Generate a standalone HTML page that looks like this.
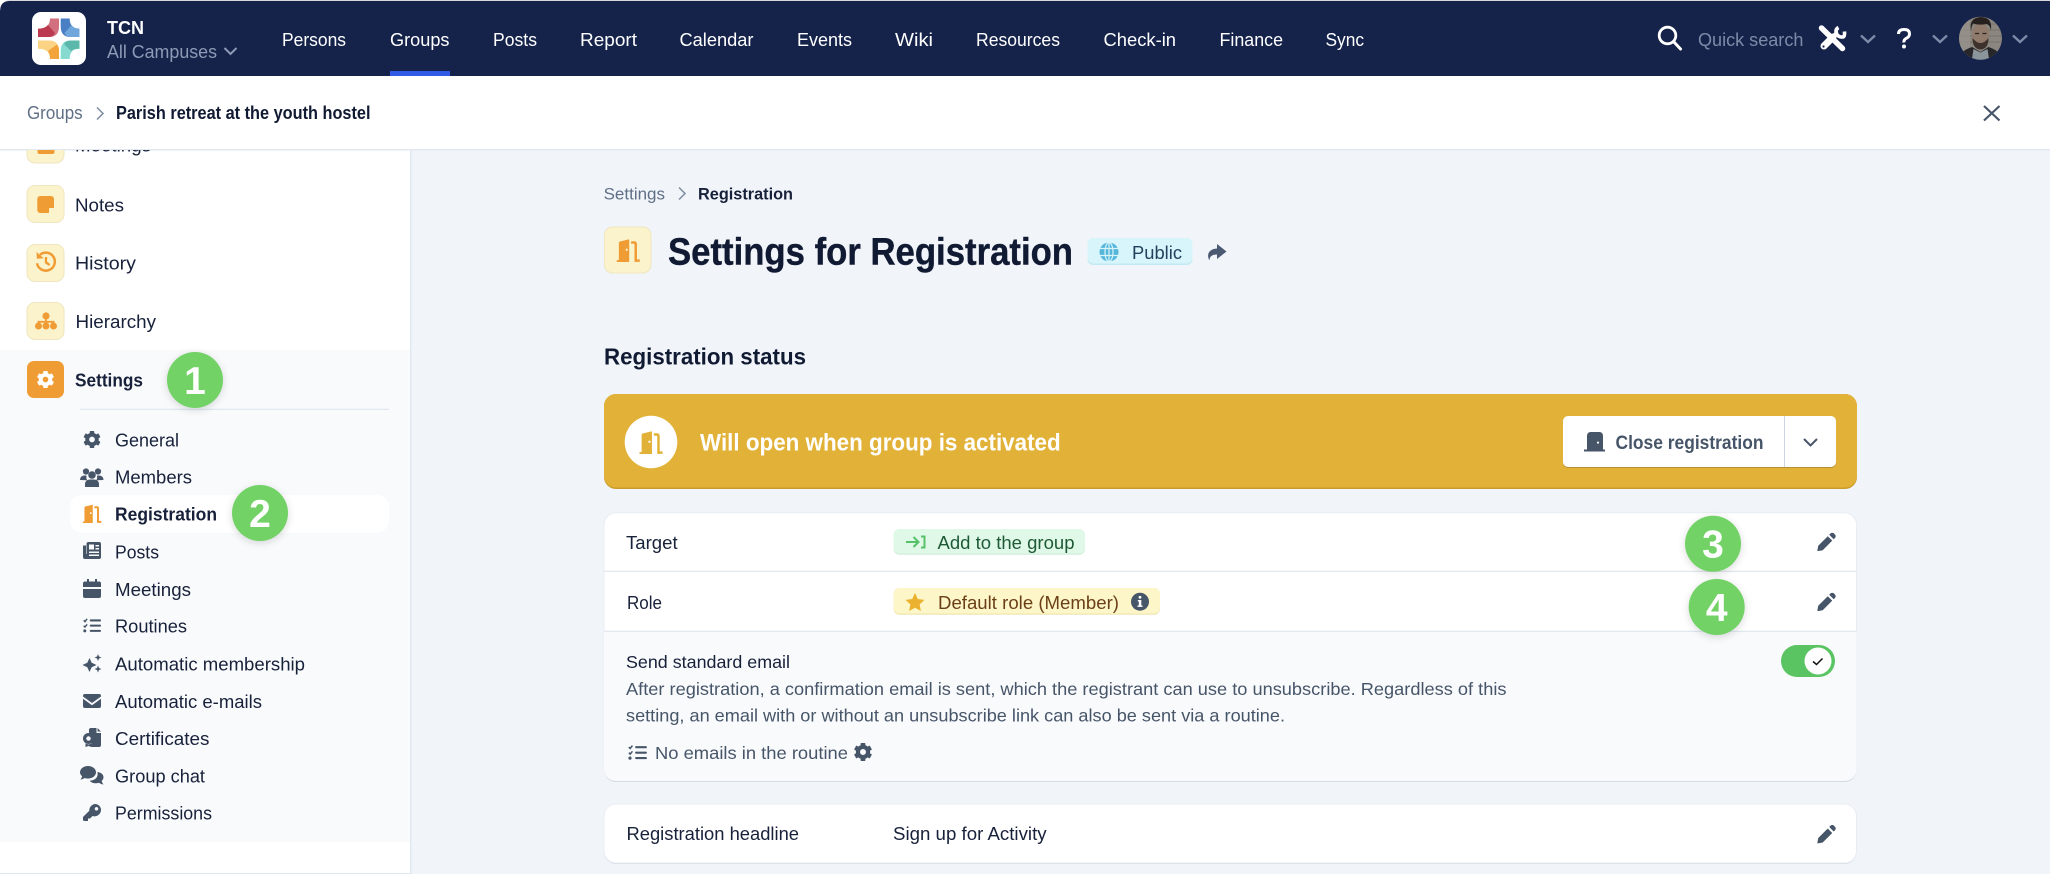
<!DOCTYPE html>
<html lang="en"><head><meta charset="utf-8"><title>Settings for Registration</title>
<style>
html,body{margin:0;padding:0;background:#fff;width:2050px;height:874px;overflow:hidden}
svg{display:block}
text{font-family:"Liberation Sans",sans-serif;font-size:18px;fill:#18213a;white-space:pre}
.n{fill:#fff}
.b{font-weight:700}
.g{fill:#475569}
</style></head><body>
<svg xmlns="http://www.w3.org/2000/svg" width="2050" height="874" viewBox="0 0 2050 874">
<defs>
<symbol id="gear" viewBox="0 0 24 24"><circle cx="12" cy="12" r="6.4" fill="none" stroke="currentColor" stroke-width="5.2"/><g fill="currentColor"><rect x="9" y="0.6" width="6" height="5" rx="1"/><rect x="9" y="0.6" width="6" height="5" rx="1" transform="rotate(60 12 12)"/><rect x="9" y="0.6" width="6" height="5" rx="1" transform="rotate(120 12 12)"/><rect x="9" y="0.6" width="6" height="5" rx="1" transform="rotate(180 12 12)"/><rect x="9" y="0.6" width="6" height="5" rx="1" transform="rotate(240 12 12)"/><rect x="9" y="0.6" width="6" height="5" rx="1" transform="rotate(300 12 12)"/></g></symbol>
<symbol id="door" viewBox="0 0 24 24"><path fill="currentColor" fill-rule="evenodd" d="M0 24v-2h2.2V4.2c0-.8.5-1.4 1.2-1.6L13 0.2V24zM9.2 11.2a1.2 1.2 0 1 0 2.4 0a1.2 1.2 0 1 0-2.4 0z"/><path fill="none" stroke="currentColor" stroke-width="2.6" d="M15 3.6h3.4c.8 0 1.4.6 1.4 1.4V22.6H24"/></symbol>
<symbol id="pencil" viewBox="0 0 19 19"><path fill="currentColor" d="M10.8 3.6l4.6 4.6L5.6 18 .6 18.9c-.3 0-.5-.2-.5-.5L1 13.4zM12.3 2.1l1.3-1.3c1-1 2.6-1 3.6 0l1 1c1 1 1 2.6 0 3.6l-1.3 1.3z"/></symbol>
<symbol id="list" viewBox="0 0 20 16"><path fill="none" stroke="currentColor" stroke-width="1.6" d="M.8 2.2l1.4 1.5L4.6.6M.8 8.2l1.4 1.5 2.4-3"/><circle cx="2" cy="14" r="1.7" fill="currentColor"/><rect x="7.5" y="1.2" width="12.5" height="2.3" rx="1" fill="currentColor"/><rect x="7.5" y="7" width="12.5" height="2.3" rx="1" fill="currentColor"/><rect x="7.5" y="12.8" width="12.5" height="2.3" rx="1" fill="currentColor"/></symbol>
<clipPath id="sideclip"><rect x="0" y="150" width="410" height="724"/></clipPath>
<clipPath id="av"><circle cx="1980.5" cy="38.3" r="21.5"/></clipPath>
</defs>

<!-- main bg -->
<rect width="2050" height="874" fill="#f1f5fa"/>

<!-- top nav -->
<rect width="2050" height="2" fill="#d8d8d8"/>
<path d="M0 76V11Q0 1 10 1H2050V76z" fill="#15234b"/>
<path d="M0 0H10Q0 1 0 11z" fill="#fff"/>
<rect x="32" y="12" width="54" height="53" rx="9" fill="#fff"/>
<!-- logo: four curved bands around a white star -->
<path d="M50 18.5h9v8Q59 37 49 37H38v-8.3Q50 28.7 50 18.5z" fill="#d2707f"/>
<path d="M38 28.7Q45 28.7 48 25L55 33Q53 37 49 37H38z" fill="#bb3a50"/>
<path d="M69.700 18.500h-9v8Q60.700 37 70.700 37H79.500v-8.300Q69.700 28.700 69.700 18.500z" fill="#4a7fc4"/>
<path d="M79.500 28.700Q74 28.700 71.500 25L64.500 33Q66.500 37 70.700 37H79.500z" fill="#6fa7dc"/>
<path d="M50 59h9v-8Q59 40.500 49 40.500H38v8.300Q50 48.800 50 59z" fill="#fad384"/>
<path d="M50 59h9v-8Q59 47 57 44.500L48 51Q50 54 50 59z" fill="#f2a33a"/>
<path d="M69.700 59h-9v-8Q60.700 40.500 70.700 40.500H79.500v8.300Q69.700 48.800 69.700 59z" fill="#86dad0"/>
<path d="M79.500 40.500H70.700Q66 40.500 64 44L71 51Q73 48.800 79.500 48.800z" fill="#5cb8aa"/>
<text x="107" y="34" class="n b" textLength="37" lengthAdjust="spacingAndGlyphs">TCN</text>
<text x="107" y="58" style="fill:#8e9ab5" textLength="110" lengthAdjust="spacingAndGlyphs">All Campuses</text>
<path d="M224.500 48l6 6 6-6" fill="none" stroke="#8e9ab5" stroke-width="2"/>
<g class="nav">
<text x="282" y="46" class="n" textLength="64" lengthAdjust="spacingAndGlyphs">Persons</text>
<text x="390" y="46" class="n" textLength="59.5" lengthAdjust="spacingAndGlyphs">Groups</text>
<text x="493" y="46" class="n" textLength="44" lengthAdjust="spacingAndGlyphs">Posts</text>
<text x="580" y="46" class="n" textLength="57" lengthAdjust="spacingAndGlyphs">Report</text>
<text x="679.5" y="46" class="n" textLength="74" lengthAdjust="spacingAndGlyphs">Calendar</text>
<text x="797" y="46" class="n" textLength="55" lengthAdjust="spacingAndGlyphs">Events</text>
<text x="895" y="46" class="n" textLength="38" lengthAdjust="spacingAndGlyphs">Wiki</text>
<text x="976" y="46" class="n" textLength="84" lengthAdjust="spacingAndGlyphs">Resources</text>
<text x="1103.5" y="46" class="n" textLength="72.5" lengthAdjust="spacingAndGlyphs">Check-in</text>
<text x="1219.5" y="46" class="n" textLength="63.5" lengthAdjust="spacingAndGlyphs">Finance</text>
<text x="1325.5" y="46" class="n" textLength="38.5" lengthAdjust="spacingAndGlyphs">Sync</text>
</g>
<rect x="390" y="71" width="60" height="5" fill="#2f5be7"/>
<!-- right nav -->
<circle cx="1667.5" cy="35.5" r="8.3" fill="none" stroke="#fff" stroke-width="2.8"/><path d="M1673.5 41.5l7 7.5" stroke="#fff" stroke-width="3" stroke-linecap="round"/>
<text x="1698" y="46" style="fill:#7d8aa8" textLength="105.4" lengthAdjust="spacingAndGlyphs">Quick search</text>
<!-- tools -->
<g fill="none" stroke="#fff">
<path d="M1821.500 28l21 20.500" stroke-width="5.500" stroke-linecap="round"/>
<path d="M1824 46l9-9" stroke-width="7" stroke-linecap="round"/>
<path d="M1832 38l4.500-4.500" stroke-width="4.500"/>
<path d="M1838.500 27.500q-3.500 2-2 6t6.500 3.500q2-.7 1.500-5.500" stroke-width="3.600"/>
</g>
<circle cx="1823.500" cy="46.500" r="1.100" fill="#15234b"/>
<g fill="none" stroke="#7d8aa8" stroke-width="2.400"><path d="M1861 35.500l7 6.500 7-6.500"/><path d="M1933 35.500l7 6.500 7-6.500"/><path d="M2013 35.500l7 6.500 7-6.500"/></g>
<path d="M1898.500 34q0-4.500 5.500-4.500t5.500 4.500q0 2.700-3 4.200t-2.500 4.300" fill="none" stroke="#fff" stroke-width="3"/><circle cx="1904" cy="46.500" r="2" fill="#fff"/>
<!-- avatar -->
<g clip-path="url(#av)"><rect x="1958" y="16" width="45" height="45" fill="#8b8780"/>
<path d="M1958 24h45M1958 30h45M1958 36h45M1958 42h45" stroke="#77736c" stroke-width="1"/>
<rect x="1958" y="16" width="12" height="45" fill="#98948d" opacity=".7"/>
<ellipse cx="1980.500" cy="35" rx="8.500" ry="12" fill="#8f7a6b"/>
<path d="M1971 31q-2.500-13 9.500-14q12 0 10.500 13q-1.500-5.500-4.500-6q-7 1.500-13.500-.5q-1.500 3-2 7.500z" fill="#26211f"/>
<path d="M1972.500 38q8 10 16 0q0 11-8 11.500q-8-.5-8-11.500z" fill="#3d322c"/>
<path d="M1975 33.500h4M1982.500 33.500h4" stroke="#2c2522" stroke-width="1.300"/>
<path d="M1958 62q1-11 14-15l8.500 5 8-5q13 4 14 15z" fill="#272729"/><path d="M1973.500 49l7 3.500 7-3.500 2 13h-18z" fill="#8a959c"/></g>

<!-- breadcrumb -->
<rect y="76" width="2050" height="73" fill="#fff"/><rect y="149" width="2050" height="1.5" fill="#e2e8f0"/>
<text x="27" y="119" style="fill:#5f6f86" textLength="55.6" lengthAdjust="spacingAndGlyphs">Groups</text>
<path d="M97 107.5l6 6-6 6" fill="none" stroke="#7f8ca0" stroke-width="1.5"/>
<text x="116" y="119" class="b" style="fill:#111a33" textLength="254.5" lengthAdjust="spacingAndGlyphs">Parish retreat at the youth hostel</text>
<path d="M1984 106l15.500 14.500M1999.500 106L1984 120.500" stroke="#475569" stroke-width="2.200" fill="none"/>

<!-- sidebar -->
<rect y="150.500" width="410" height="723.500" fill="#fff"/>
<rect x="410" y="150" width="1.500" height="724" fill="#e2e8f0"/>
<rect y="873" width="410" height="1" fill="#e2e8f0"/>
<rect y="350" width="410" height="492" fill="#f8fafc"/>
<g clip-path="url(#sideclip)">
<rect x="27" y="126" width="37" height="37" rx="8" fill="#fbf3cc" stroke="#efe6bf"/>
<rect x="37.5" y="135" width="17" height="19" rx="2" fill="#f09c35"/>
<text x="75" y="151.500" textLength="76" lengthAdjust="spacingAndGlyphs">Meetings</text>
</g>
<rect x="27" y="185.500" width="37" height="37" rx="8" fill="#fbf3cc" stroke="#efe6bf"/>
<path d="M40.300 196h10.700a3 3 0 0 1 3 3V207.500l-5.500 5.500H40.300a3 3 0 0 1-3-3v-11a3 3 0 0 1 3-3z" fill="#f09c35"/><path d="M49 213v-4a1 1 0 0 1 1-1h4z" fill="#fbf3cc"/>
<text x="75" y="211.300" textLength="49" lengthAdjust="spacingAndGlyphs">Notes</text>
<rect x="27" y="244.500" width="37" height="37" rx="8" fill="#fbf3cc" stroke="#efe6bf"/>
<path d="M40 254.800a9 9 0 1 1-3 8.500" fill="none" stroke="#f09c35" stroke-width="2.500"/><path d="M36.500 252l.4 6.800 6.800-.5z" fill="#f09c35"/><path d="M46 257v5.500l3.700 2.600" fill="none" stroke="#f09c35" stroke-width="2.300"/>
<text x="75" y="269.700" textLength="61" lengthAdjust="spacingAndGlyphs">History</text>
<rect x="27" y="302.500" width="37" height="37" rx="8" fill="#fbf3cc" stroke="#efe6bf"/>
<g fill="#f09c35"><circle cx="46" cy="316" r="3.600"/><rect x="45.100" y="318" width="1.800" height="6"/><path d="M38.500 326v-4.200h15v4.200" fill="none" stroke="#f09c35" stroke-width="1.800"/><circle cx="38.500" cy="326" r="3.500"/><circle cx="46" cy="326" r="3.500"/><circle cx="53.500" cy="326" r="3.500"/></g>
<text x="75.5" y="328" textLength="80.5" lengthAdjust="spacingAndGlyphs">Hierarchy</text>
<rect x="27" y="361" width="37" height="37" rx="7" fill="#f09c35"/>
<use href="#gear" x="36.5" y="370.5" width="18" height="18" style="color:#fff"/>
<text x="75" y="386.700" class="b" textLength="68" lengthAdjust="spacingAndGlyphs">Settings</text>
<rect x="80" y="408.7" width="309" height="1.3" fill="#e2e8f0"/>
<rect x="70" y="495" width="319" height="37.7" rx="12" fill="#fff"/>

<use href="#gear" x="83" y="430.5" width="18" height="18" style="color:#475569"/>
<text x="115" y="446.500" textLength="64" lengthAdjust="spacingAndGlyphs">General</text>
<g fill="#475569"><circle cx="86" cy="471.5" r="3.100"/><circle cx="98" cy="471.5" r="3.100"/><circle cx="92" cy="475" r="3.800"/><path d="M80 480q0-4.500 5-4.500h1.500q-.5 4 1 4.800z"/><path d="M103.500 480q0-4.500-5-4.500H97q.5 4-1 4.800z"/><path d="M85 487v-2.500q0-5 5-5h4q5 0 5 5V487z"/></g>
<text x="115" y="483.300" textLength="77" lengthAdjust="spacingAndGlyphs">Members</text>
<use href="#door" x="82" y="504.5" width="20" height="18.5" style="color:#f09c35" preserveAspectRatio="none"/>
<text x="115" y="520.600" class="b" textLength="102" lengthAdjust="spacingAndGlyphs">Registration</text>
<path fill="#475569" fill-rule="evenodd" d="M88 542h11a2 2 0 0 1 2 2v13a2 2 0 0 1-2 2H85a2 2 0 0 1-2-2v-11.500h3V554h0.500V544a2 2 0 0 1 1.500-2zM89 544.500v5h5v-5zM95.500 545v1.500h3.500V545zM95.500 548v1.500h3.500V548zM89 551.500v1.500h10v-1.500zM89 554.500v1.500h10v-1.500z"/>
<text x="115" y="558.300" textLength="44" lengthAdjust="spacingAndGlyphs">Posts</text>
<path fill="#475569" d="M87 579h2v2.500h6V579h2v2.500h2a2 2 0 0 1 2 2V587H83v-3.500a2 2 0 0 1 2-2h2zM83 589h18v7a2 2 0 0 1-2 2H85a2 2 0 0 1-2-2z"/>
<text x="115" y="595.800" textLength="76" lengthAdjust="spacingAndGlyphs">Meetings</text>
<use href="#list" x="83" y="618" width="18" height="15" style="color:#475569"/>
<text x="115" y="632.700" textLength="72" lengthAdjust="spacingAndGlyphs">Routines</text>
<g fill="#475569"><path d="M89.500 658l2.200 4.800 4.800 2.200-4.800 2.200-2.200 4.800-2.200-4.800-4.800-2.200 4.800-2.200z"/><path d="M98 654l1 2.500 2.500 1-2.500 1-1 2.500-1-2.500-2.500-1 2.500-1z"/><path d="M98 665.500l1 2.500 2.500 1-2.500 1-1 2.500-1-2.500-2.500-1 2.500-1z"/></g>
<text x="115" y="670.700" textLength="190" lengthAdjust="spacingAndGlyphs">Automatic membership</text>
<path fill="#475569" d="M85 694h14a2 2 0 0 1 2 2v.5l-9 6.500-9-6.500V696a2 2 0 0 1 2-2zM83 698.800l9 6.400 9-6.400V706a2 2 0 0 1-2 2H85a2 2 0 0 1-2-2z"/>
<text x="115" y="708" textLength="147" lengthAdjust="spacingAndGlyphs">Automatic e-mails</text>
<path fill="#475569" fill-rule="evenodd" d="M91 728h5.500v5h4.500v12a2 2 0 0 1-2 2h-7.500v-5.500a7 7 0 0 0-2.500-8.500v-3a2 2 0 0 1 2-2zM97.500 728l3.500 3.500h-3.500z"/><path fill="#475569" fill-rule="evenodd" d="M88.500 733a5.500 5.500 0 1 1-.01 0zM88.500 736.300a2.200 2.200 0 1 0 .01 0zM85.500 743.500l3 1 3-1v3.500l-3-1-3 1z"/>
<text x="115" y="745" textLength="94.5" lengthAdjust="spacingAndGlyphs">Certificates</text>
<path fill="#475569" d="M88 766c4.500 0 8 2.800 8 6.300s-3.500 6.300-8 6.300c-1.300 0-2.500-.2-3.500-.6-1 .8-2.500 1.500-4.200 1.500 1-1 1.700-2.300 1.800-3.300-1.300-1-2.100-2.400-2.100-3.900 0-3.500 3.500-6.300 8-6.300z"/><path fill="#475569" d="M97.500 772c3.500.4 6 2.500 6 5.200 0 1.400-.7 2.700-1.800 3.600.1 1.300.9 2.600 1.800 3.700-1.800 0-3.300-.8-4.400-1.700-1 .3-2 .5-3.100.5-2.700 0-5-1-6.300-2.600 5-.2 8.800-3 7.800-8.700z"/>
<text x="115" y="782.700" textLength="90" lengthAdjust="spacingAndGlyphs">Group chat</text>
<path fill="#475569" fill-rule="evenodd" d="M95 804a6 6 0 0 1 6 6 6.500 6.500 0 0 1-8.500 6L90 818.500h-2V821h-3.500a1.500 1.500 0 0 1-1.500-1.500v-2.500l6.300-6.300A6.500 6.500 0 0 1 95 804zM96.500 807a1.800 1.800 0 1 0 .01 0z"/>
<text x="115" y="819.300" textLength="97" lengthAdjust="spacingAndGlyphs">Permissions</text>

<!-- main header -->
<text x="603.6" y="199.700" style="font-size:17px;fill:#5f6f86" textLength="61.4" lengthAdjust="spacingAndGlyphs">Settings</text>
<path d="M679 187.5l6 6-6 6" fill="none" stroke="#7f8ca0" stroke-width="1.5"/>
<text x="698" y="199.700" class="b" style="font-size:17px;fill:#18213a" textLength="95" lengthAdjust="spacingAndGlyphs">Registration</text>
<rect x="604.5" y="227" width="46.5" height="46" rx="8" fill="#fbf3cc" stroke="#efe6bf"/>
<use href="#door" x="616" y="239" width="24.5" height="23" style="color:#f09c35" preserveAspectRatio="none"/>
<text x="668" y="264.500" class="b" style="font-size:38px;fill:#111a33;stroke:#111a33;stroke-width:.4" textLength="405" lengthAdjust="spacingAndGlyphs">Settings for Registration</text>
<rect x="1087.5" y="238" width="105" height="27" rx="6" fill="#bfe9f3"/><rect x="1087.5" y="238" width="105" height="25.5" rx="6" fill="#d9f5fc"/>
<circle cx="1109" cy="252" r="9.5" fill="#55b6da"/><path d="M1099.500 248.500h19M1099.500 255.500h19M1109 242.500v19" stroke="#d9f5fc" stroke-width="1.200"/><ellipse cx="1109" cy="252" rx="4" ry="9.500" fill="none" stroke="#d9f5fc" stroke-width="1.200"/>
<text x="1132" y="259" style="fill:#21415c" textLength="50" lengthAdjust="spacingAndGlyphs">Public</text>
<path fill="#4b5a72" d="M1217 244l9.500 7.500-9.500 7.500v-4.500c-4.500 0-7.500 1.500-7.500 6-3-5-1.500-11.500 7.500-12z"/>

<text x="604" y="364.500" class="b" style="font-size:23px;fill:#111a33" textLength="202" lengthAdjust="spacingAndGlyphs">Registration status</text>

<!-- banner -->
<rect x="604" y="394" width="1253" height="95" rx="12" fill="#c99c2a"/><rect x="604" y="394" width="1253" height="93.5" rx="12" fill="#e2b238"/>
<circle cx="651" cy="442" r="26.3" fill="#fff"/>
<use href="#door" x="639" y="431" width="24" height="23" style="color:#e2b238" preserveAspectRatio="none"/>
<text x="700" y="450.7" class="b n" style="font-size:24px" textLength="360.7" lengthAdjust="spacingAndGlyphs">Will open when group is activated</text>
<rect x="1563" y="417" width="273" height="51" rx="5" fill="#8d7530" opacity=".55"/>
<rect x="1563" y="416" width="273" height="51" rx="5" fill="#fff"/>
<rect x="1784" y="416" width="1" height="51" fill="#cbd5e1"/>
<path fill="#475569" fill-rule="evenodd" d="M1587 451.500v-16a3.500 3.500 0 0 1 3.500-3.500h9a3.500 3.500 0 0 1 3.500 3.500v14h2v2zM1598 441.500a1.100 1.100 0 1 0 .01 0z"/><rect x="1584" y="449.5" width="21" height="2" fill="#475569"/>
<text x="1615.5" y="449" class="b" style="font-size:19px;fill:#475569" textLength="148" lengthAdjust="spacingAndGlyphs">Close registration</text>
<path d="M1804 439l6.500 6.500 6.500-6.500" fill="none" stroke="#475569" stroke-width="2"/>

<!-- card 1 -->
<rect x="604" y="514" width="1252.5" height="268" rx="12" fill="#cfd6e0"/>
<rect x="604" y="512.7" width="1252.5" height="268" rx="12" fill="#fff" stroke="#e8edf3"/>
<path d="M604 631.500H1856.500V769a12 12 0 0 1-12 12H616a12 12 0 0 1-12-12z" fill="#f8fafc"/>
<rect x="604" y="570.7" width="1252.5" height="1.3" fill="#e2e8f0"/><rect x="604" y="630.7" width="1252.5" height="1.3" fill="#e2e8f0"/>
<text x="626" y="549" textLength="51.6" lengthAdjust="spacingAndGlyphs">Target</text>
<text x="627" y="609" textLength="35" lengthAdjust="spacingAndGlyphs">Role</text>
<rect x="893.5" y="529" width="191.5" height="25.7" rx="6" fill="#cfeeda"/><rect x="893.5" y="529" width="191.5" height="24.5" rx="6" fill="#e0f8e7"/>
<path d="M906 542h12M913.500 537l5 5-5 5" fill="none" stroke="#56c268" stroke-width="2"/><path d="M921 536.500h3.500v11H921" fill="none" stroke="#56c268" stroke-width="2"/>
<text x="937.5" y="549" style="fill:#1e5a36" textLength="137" lengthAdjust="spacingAndGlyphs">Add to the group</text>
<use href="#pencil" x="1817" y="532.7" width="19" height="18.5" style="color:#475569"/>
<rect x="893.5" y="588" width="266.5" height="26.7" rx="6" fill="#efe6ae"/><rect x="893.5" y="588" width="266.5" height="25.5" rx="6" fill="#fdf6c8"/>
<path fill="#ebb231" d="M915 593l2.800 6 6.700.9-4.900 4.500 1.300 6.600-5.900-3.300-5.900 3.300 1.300-6.600-4.900-4.500 6.700-.9z"/>
<text x="938" y="609" style="fill:#6b3f16" textLength="181" lengthAdjust="spacingAndGlyphs">Default role (Member)</text>
<circle cx="1140" cy="601.7" r="9" fill="#475569"/><rect x="1138.8" y="600" width="2.5" height="6" fill="#fff"/><rect x="1137.8" y="600" width="3" height="1.4" fill="#fff"/><rect x="1137.5" y="605.5" width="5" height="1.4" fill="#fff"/><circle cx="1140" cy="597.3" r="1.4" fill="#fff"/>
<use href="#pencil" x="1817" y="592.7" width="19" height="18.5" style="color:#475569"/>
<text x="626" y="668" style="font-size:17.5px" textLength="164" lengthAdjust="spacingAndGlyphs">Send standard email</text>
<text x="626" y="695" class="g" style="font-size:17.5px" textLength="880.5" lengthAdjust="spacingAndGlyphs">After registration, a confirmation email is sent, which the registrant can use to unsubscribe. Regardless of this</text>
<text x="626" y="721.7" class="g" style="font-size:17.5px" textLength="659" lengthAdjust="spacingAndGlyphs">setting, an email with or without an unsubscribe link can also be sent via a routine.</text>
<use href="#list" x="628" y="745" width="19" height="15" style="color:#475569"/>
<text x="655" y="759" class="g" style="font-size:17.5px" textLength="193" lengthAdjust="spacingAndGlyphs">No emails in the routine</text>
<use href="#gear" x="853.5" y="742.5" width="19" height="19" style="color:#475569"/>
<rect x="1781" y="645" width="54" height="32" rx="16" fill="#5ac462"/>
<circle cx="1818" cy="661" r="13.5" fill="#fff"/><path d="M1813 661.500l3.500 3 6-6" fill="none" stroke="#111" stroke-width="1.500"/>

<!-- card 2 -->
<rect x="604" y="805" width="1252.5" height="59" rx="12" fill="#cfd6e0"/>
<rect x="604" y="804" width="1252.5" height="59" rx="12" fill="#fff" stroke="#e8edf3"/>
<text x="626.5" y="840.200" textLength="172.500" lengthAdjust="spacingAndGlyphs">Registration headline</text>
<text x="893" y="840.200" textLength="153.6" lengthAdjust="spacingAndGlyphs">Sign up for Activity</text>
<use href="#pencil" x="1817" y="825" width="19" height="18.5" style="color:#475569"/>

<!-- annotation circles -->
<g fill="#72d266" style="filter:drop-shadow(0 2px 4px rgba(0,0,0,.15))">
<circle cx="195" cy="380" r="28"/><circle cx="260" cy="513" r="28"/><circle cx="1713" cy="543.7" r="28"/><circle cx="1716.7" cy="607" r="28"/>
</g>
<g text-anchor="middle" class="d">
<text x="195" y="394" class="n b" style="font-size:39px">1</text>
<text x="260" y="527" class="n b" style="font-size:39px">2</text>
<text x="1713" y="557.7" class="n b" style="font-size:39px">3</text>
<text x="1716.7" y="621" class="n b" style="font-size:39px">4</text>
</g>
</svg>
</body></html>
